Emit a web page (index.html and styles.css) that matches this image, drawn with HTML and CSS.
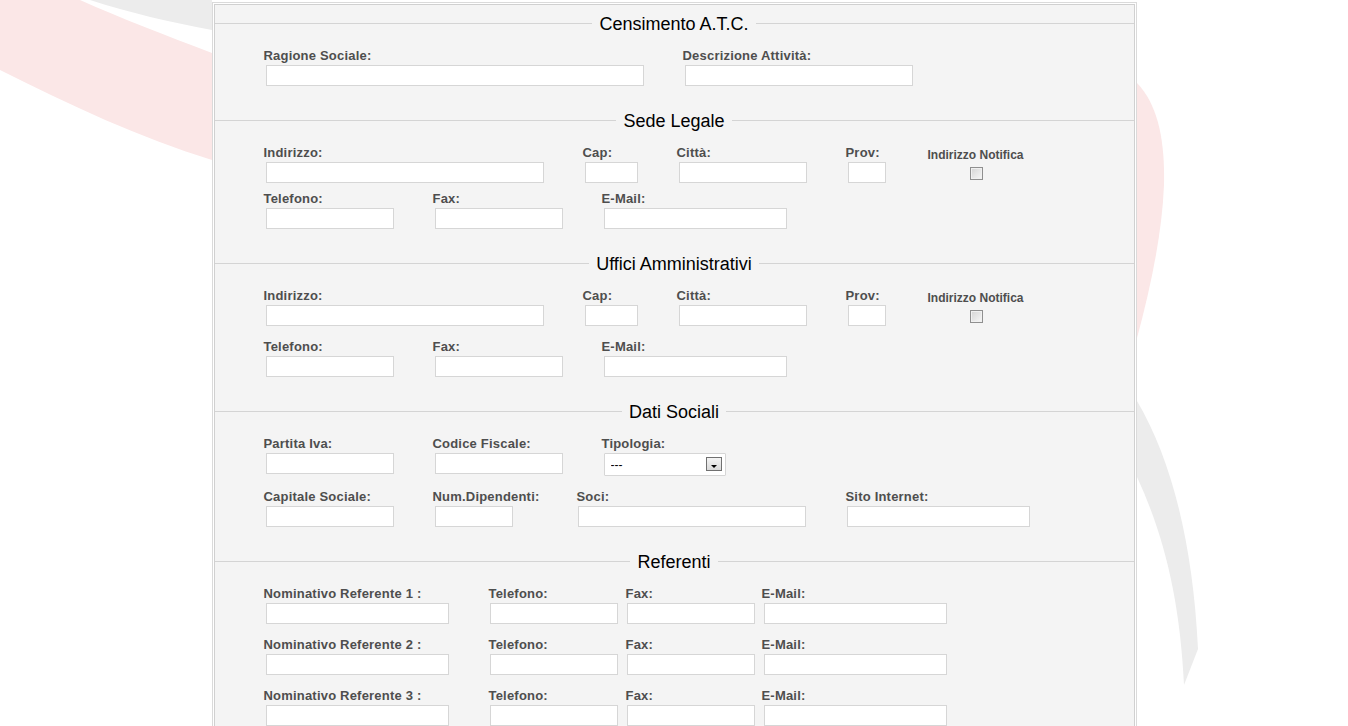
FILE: index.html
```html
<!DOCTYPE html>
<html lang="it">
<head>
  <meta charset="UTF-8" />
  <meta name="viewport" content="width=device-width, initial-scale=1.0" />
  <title>Censimento A.T.C.</title>
  <link rel="stylesheet" href="styles.css">
</head>
<body>
  <!-- background swooshes -->
  <svg class="backdrop" width="1348" height="726" viewBox="0 0 1348 726" aria-hidden="true">
    <path class="swoosh-grey" d="M90,0 L212,0 L212,30 C170,22 130,13 90,0 Z" />
    <path class="swoosh-red" d="M0,0 L80,0 C120,18 165,35 212,53 L212,160 C140,138 70,105 0,70 Z" />
    <path class="swoosh-red" d="M1137,83 C1158,105 1165,140 1164,185 C1162,235 1150,290 1137,338 Z" />
    <path class="swoosh-grey" d="M1137,401 C1172,460 1193,545 1198,649 L1184,685 C1180,600 1164,535 1137,477 Z" />
  </svg>

  <div class="page">
    <form class="sheet">

      <fieldset class="group">
        <legend>Censimento A.T.C.</legend>
        <div class="rows">
          <div class="row">
            <div class="field w419"><label>Ragione Sociale:</label><input type="text" class="in-xl"></div>
            <div class="field"><label>Descrizione Attività:</label><input type="text" class="in-md"></div>
          </div>
        </div>
      </fieldset>

      <fieldset class="group">
        <legend>Sede Legale</legend>
        <div class="rows tight">
          <div class="row">
            <div class="field w319"><label>Indirizzo:</label><input type="text" class="in-lg"></div>
            <div class="field w94"><label>Cap:</label><input type="text" class="in-cap"></div>
            <div class="field w169"><label>Città:</label><input type="text" class="in-sm"></div>
            <div class="field w82"><label>Prov:</label><input type="text" class="in-prov"></div>
            <div class="notify"><span>Indirizzo Notifica</span><input type="checkbox" class="check"></div>
          </div>
          <div class="row">
            <div class="field w169"><label>Telefono:</label><input type="text" class="in-sm"></div>
            <div class="field w169"><label>Fax:</label><input type="text" class="in-sm"></div>
            <div class="field"><label>E-Mail:</label><input type="text" class="in-email"></div>
          </div>
        </div>
      </fieldset>

      <fieldset class="group">
        <legend>Uffici Amministrativi</legend>
        <div class="rows">
          <div class="row">
            <div class="field w319"><label>Indirizzo:</label><input type="text" class="in-lg"></div>
            <div class="field w94"><label>Cap:</label><input type="text" class="in-cap"></div>
            <div class="field w169"><label>Città:</label><input type="text" class="in-sm"></div>
            <div class="field w82"><label>Prov:</label><input type="text" class="in-prov"></div>
            <div class="notify"><span>Indirizzo Notifica</span><input type="checkbox" class="check"></div>
          </div>
          <div class="row">
            <div class="field w169"><label>Telefono:</label><input type="text" class="in-sm"></div>
            <div class="field w169"><label>Fax:</label><input type="text" class="in-sm"></div>
            <div class="field"><label>E-Mail:</label><input type="text" class="in-email"></div>
          </div>
        </div>
      </fieldset>

      <fieldset class="group">
        <legend>Dati Sociali</legend>
        <div class="rows">
          <div class="row">
            <div class="field w169"><label>Partita Iva:</label><input type="text" class="in-sm"></div>
            <div class="field w169"><label>Codice Fiscale:</label><input type="text" class="in-sm"></div>
            <div class="field">
              <label>Tipologia:</label>
              <div class="select">
                <select>
                  <option>---</option>
                </select>
                <span class="select-btn"></span>
              </div>
            </div>
          </div>
          <div class="row">
            <div class="field w169"><label>Capitale Sociale:</label><input type="text" class="in-sm"></div>
            <div class="field w144"><label>Num.Dipendenti:</label><input type="text" class="in-num"></div>
            <div class="field w269"><label>Soci:</label><input type="text" class="in-md shift"></div>
            <div class="field"><label>Sito Internet:</label><input type="text" class="in-email shift"></div>
          </div>
        </div>
      </fieldset>

      <fieldset class="group">
        <legend>Referenti</legend>
        <div class="rows">
          <div class="row">
            <div class="field w225"><label>Nominativo Referente 1 :</label><input type="text" class="in-email"></div>
            <div class="field w137"><label>Telefono:</label><input type="text" class="in-sm shift"></div>
            <div class="field w136"><label>Fax:</label><input type="text" class="in-sm shift"></div>
            <div class="field"><label>E-Mail:</label><input type="text" class="in-email"></div>
          </div>
          <div class="row">
            <div class="field w225"><label>Nominativo Referente 2 :</label><input type="text" class="in-email"></div>
            <div class="field w137"><label>Telefono:</label><input type="text" class="in-sm shift"></div>
            <div class="field w136"><label>Fax:</label><input type="text" class="in-sm shift"></div>
            <div class="field"><label>E-Mail:</label><input type="text" class="in-email"></div>
          </div>
          <div class="row">
            <div class="field w225"><label>Nominativo Referente 3 :</label><input type="text" class="in-email"></div>
            <div class="field w137"><label>Telefono:</label><input type="text" class="in-sm shift"></div>
            <div class="field w136"><label>Fax:</label><input type="text" class="in-sm shift"></div>
            <div class="field"><label>E-Mail:</label><input type="text" class="in-email"></div>
          </div>
        </div>
      </fieldset>

    </form>
  </div>
</body>
</html>
```

FILE: styles.css
```css
:root {
  --sheet-bg: #f4f4f4;
  --line: #d4d4d4;
  --label: #4e4e4e;
  --input-border: #d6d6d6;
}

body {
  margin: 0;
  background: #fff;
  font-family: "Liberation Sans", Arial, sans-serif;
  font-size: 13px;
  color: #000;
}

.backdrop {
  position: absolute;
  top: 0;
  left: 0;
  z-index: -1;
}

.swoosh-red { fill: #fbe7e7; }
.swoosh-grey { fill: #ececec; }

/* double frame round the form */
.page {
  width: 925px;
  box-sizing: border-box;
  margin: 2px auto 0;
  border: 1px solid #dadada;
  padding: 1px;
  background: #fff;
}

.sheet {
  margin: 0;
  border: 1px solid #d0d0d0;
  background: var(--sheet-bg);
  padding-top: 8px;
  padding-bottom: 30px;
}

.group {
  margin: 0;
  min-width: 0;
  border: 0;
  border-top: 1px solid var(--line);
  padding: 14px 0 24px;
}

.group legend {
  margin: 0 auto;
  padding: 0 7px;
  font-size: 18px;
  line-height: 20px;
  color: #000;
  position: relative;
  top: 1px;
}

.rows {
  display: flex;
  flex-direction: column;
  gap: 12px;
  padding-left: 49px;
}

.rows.tight { gap: 7px; }

.row {
  display: flex;
  align-items: flex-start;
}

.field label {
  display: block;
  font-weight: bold;
  line-height: 16px;
  letter-spacing: 0.2px;
  color: var(--label);
  white-space: nowrap;
  padding-top: 1px;
  margin-bottom: 1px;
}

.field input {
  display: block;
  box-sizing: border-box;
  height: 21px;
  margin: 0 0 0 2px;
  padding: 0 3px;
  border: 1px solid var(--input-border);
  background: #fff;
  font: 13px "Liberation Sans", Arial, sans-serif;
  outline: none;
}

.field input.shift { margin-left: 1px; }

/* column widths */
.w82 { width: 82px; }
.w94 { width: 94px; }
.w136 { width: 136px; }
.w137 { width: 137px; }
.w144 { width: 144px; }
.w169 { width: 169px; }
.w225 { width: 225px; }
.w269 { width: 269px; }
.w319 { width: 319px; }
.w419 { width: 419px; }

/* input sizes */
.in-xl { width: 378px; }
.in-lg { width: 278px; }
.in-md { width: 228px; }
.in-email { width: 183px; }
.in-sm { width: 128px; }
.in-num { width: 78px; }
.in-cap { width: 53px; }
.in-prov { width: 38px; }

.notify {
  display: flex;
  flex-direction: column;
  align-items: center;
  padding-top: 3px;
}

.notify span {
  font-size: 12px;
  font-weight: bold;
  line-height: 16px;
  color: var(--label);
  white-space: nowrap;
}

.check {
  appearance: none;
  width: 13px;
  height: 13px;
  margin: 4px 0 0 2px;
  border: 1px solid #8f8f8f;
  background: linear-gradient(135deg, #d4d4d4, #f7f7f7);
  box-shadow: inset 0 0 0 1px #f0f0f0;
}

.select {
  position: relative;
  width: 122px;
  height: 23px;
  margin-left: 2px;
}

.select select {
  appearance: none;
  width: 100%;
  height: 100%;
  box-sizing: border-box;
  margin: 0;
  padding: 0 0 0 6px;
  border: 1px solid var(--input-border);
  border-radius: 1px;
  background: #fff;
  font: 12px "Liberation Sans", Arial, sans-serif;
  color: #000;
  outline: none;
}

.select-btn {
  position: absolute;
  top: 4px;
  right: 4px;
  width: 16px;
  height: 14px;
  box-sizing: border-box;
  border: 1px solid #707070;
  background: linear-gradient(#f4f4f4, #d9d9d9);
  pointer-events: none;
}

.select-btn::after {
  content: "";
  position: absolute;
  left: 4px;
  top: 7px;
  border-left: 3px solid transparent;
  border-right: 3px solid transparent;
  border-top: 3px solid #000;
}
```
